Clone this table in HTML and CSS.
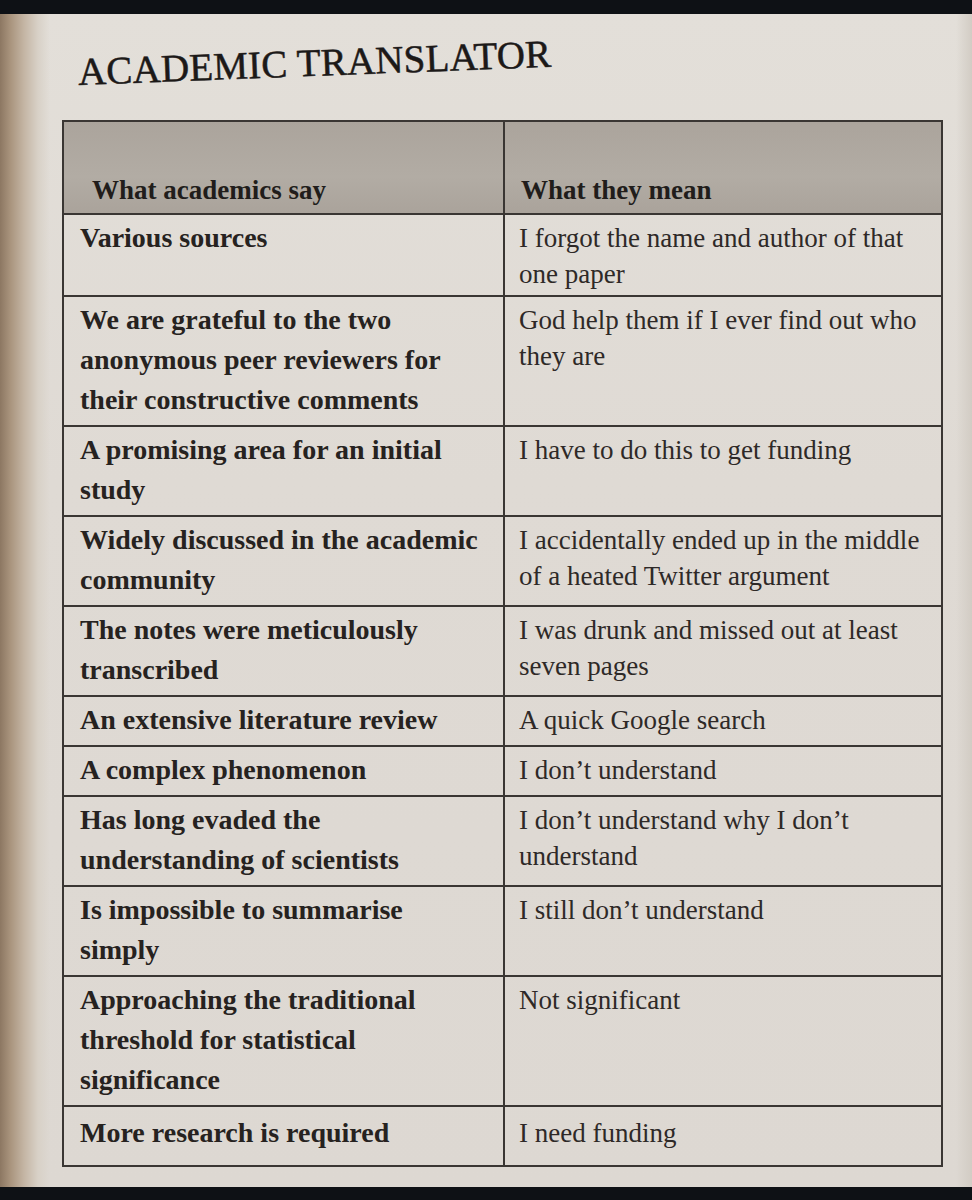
FILE: index.html
```html
<!DOCTYPE html>
<html lang="en">
<head>
<meta charset="utf-8">
<title>Academic Translator</title>
<link rel="stylesheet" href="styles.css">
</head>
<body>
<div class="page">
  <h1 class="title">ACADEMIC TRANSLATOR</h1>
  <table class="translator">
    <thead>
      <tr>
        <th class="say">What academics say</th>
        <th class="mean">What they mean</th>
      </tr>
    </thead>
    <tbody>
      <tr>
        <td class="say">Various sources</td>
        <td class="mean">I forgot the name and author of that<br>one paper</td>
      </tr>
      <tr>
        <td class="say">We are grateful to the two<br>anonymous peer reviewers for<br>their constructive comments</td>
        <td class="mean">God help them if I ever find out who<br>they are</td>
      </tr>
      <tr>
        <td class="say">A promising area for an initial<br>study</td>
        <td class="mean">I have to do this to get funding</td>
      </tr>
      <tr>
        <td class="say">Widely discussed in the academic<br>community</td>
        <td class="mean">I accidentally ended up in the middle<br>of a heated Twitter argument</td>
      </tr>
      <tr>
        <td class="say">The notes were meticulously<br>transcribed</td>
        <td class="mean">I was drunk and missed out at least<br>seven pages</td>
      </tr>
      <tr>
        <td class="say">An extensive literature review</td>
        <td class="mean">A quick Google search</td>
      </tr>
      <tr>
        <td class="say">A complex phenomenon</td>
        <td class="mean">I don’t understand</td>
      </tr>
      <tr>
        <td class="say">Has long evaded the<br>understanding of scientists</td>
        <td class="mean">I don’t understand why I don’t<br>understand</td>
      </tr>
      <tr>
        <td class="say">Is impossible to summarise<br>simply</td>
        <td class="mean">I still don’t understand</td>
      </tr>
      <tr>
        <td class="say">Approaching the traditional<br>threshold for statistical<br>significance</td>
        <td class="mean">Not significant</td>
      </tr>
      <tr class="last">
        <td class="say">More research is required</td>
        <td class="mean">I need funding</td>
      </tr>
    </tbody>
  </table>
</div>
</body>
</html>
```
FILE: styles.css
```css
html, body {
  margin: 0;
  padding: 0;
  background: #0e1115;
}

body {
  padding: 14px 0 13px;
  font-family: "Liberation Serif", "Times New Roman", serif;
}

.page {
  height: 1173px;
  box-sizing: border-box;
  padding: 38px 29px 0 62px;
  background:
    linear-gradient(90deg, #8c7762 0px, #a8937c 10px, #c4b5a4 24px, #d8d1c7 38px, rgba(222,217,210,0) 50px),
    linear-gradient(270deg, #d2ccc4 0px, rgba(222,217,210,0) 16px),
    linear-gradient(180deg, #e3dfd9 0%, #dfdad4 40%, #ddd8d2 100%);
  overflow: hidden;
}

.title {
  margin: 0 0 28px 16px;
  font-weight: normal;
  font-size: 39px;
  line-height: 40px;
  letter-spacing: 0.2px;
  color: #1c1918;
  -webkit-text-stroke: 0.5px #1c1918;
  transform: rotate(-2.2deg);
  transform-origin: left center;
  white-space: nowrap;
}

.translator {
  width: 881px;
  border-collapse: collapse;
  table-layout: fixed;
  color: #2a2624;
  font-size: 27px;
}

.translator th,
.translator td {
  border: 2px solid #3a3633;
  text-align: left;
  vertical-align: top;
}

.translator th {
  background: linear-gradient(180deg, #aba49c 0%, #b2aca4 60%, #aaa39b 100%);
  font-weight: bold;
  line-height: 36px;
  padding: 50px 12px 5px 16px;
  color: #211d1b;
}

.translator th.say {
  width: 441px;
  box-sizing: border-box;
  padding-left: 28px;
}

.translator td.say {
  font-weight: bold;
  font-size: 28px;
  line-height: 40px;
  padding: 3px 8px 5px 16px;
  color: #262220;
}

.translator td.mean {
  font-weight: normal;
  line-height: 36px;
  padding: 5px 8px 3px 14px;
  color: #2e2927;
}

.translator tr.last td.say {
  padding-top: 6px;
  padding-bottom: 12px;
}

.translator tr.last td.mean {
  padding-top: 8px;
}
```
